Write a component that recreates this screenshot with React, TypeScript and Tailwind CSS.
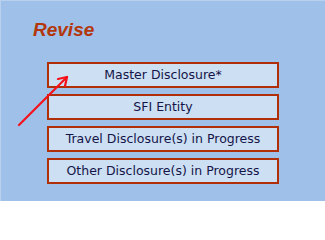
import React from 'react';

const items = [
  'Master Disclosure*',
  'SFI Entity',
  'Travel Disclosure(s) in Progress',
  'Other Disclosure(s) in Progress',
];

const App: React.FC = () => {
  return (
    <div className="relative w-[325px] h-[201px] overflow-hidden bg-[#9fc0e8] border-t border-l border-[#b9d1ee]">
      <div className="pt-[18px] pl-[32px]">
        <h1 className="text-[19px] leading-[22px] font-bold italic text-[#b3370d] [font-family:'Liberation_Sans',Arial,sans-serif]">
          Revise
        </h1>
      </div>

      <div className="mt-[21px] ml-[46px] w-[232px] flex flex-col gap-[6px]">
        {items.map((label) => (
          <div
            key={label}
            className="h-[26px] flex items-center justify-center border-2 border-[#b02f08] bg-[#cddff3] text-[12.5px] text-[#141448] [font-family:'DejaVu_Sans',Verdana,sans-serif]"
          >
            {label}
          </div>
        ))}
      </div>

      {/* red pointer arrow */}
      <svg className="absolute left-0 top-0 pointer-events-none" width="325" height="201" viewBox="0 0 325 201">
        <g stroke="#f5101a" strokeWidth="2.2" fill="none" strokeLinecap="round">
          <line x1="18" y1="124" x2="66" y2="76" />
          <line x1="66" y1="76" x2="57" y2="78" />
          <line x1="66" y1="76" x2="64" y2="85" />
        </g>
      </svg>
    </div>
  );
};

export default App;
